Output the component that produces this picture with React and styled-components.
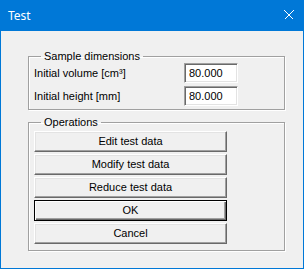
import React from 'react'
import styled, { createGlobalStyle } from 'styled-components'

const GlobalStyle = createGlobalStyle`
  html, body {
    margin: 0;
    padding: 0;
    background: #f0f0f0;
  }
  * {
    box-sizing: border-box;
  }
`

const Window = styled.div`
  width: 304px;
  height: 269px;
  display: flex;
  flex-direction: column;
  background: #f0f0f0;
  border: 1px solid #0078d7;
  border-top: 0;
  font-family: 'Liberation Sans', Arial, sans-serif;
  font-size: 11px;
  color: #000;
`

const TitleBar = styled.div`
  height: 31px;
  flex: none;
  display: flex;
  align-items: center;
  justify-content: space-between;
  padding: 0 10px 1px 8px;
  margin: 0 -1px;
  background: #0078d7;
  color: #fff;
`

const Title = styled.span`
  font-family: 'Noto Sans', 'Open Sans', sans-serif;
  font-size: 12px;
`

const Body = styled.div`
  display: flex;
  flex-direction: column;
  gap: 6px;
  padding: 19px 18px 0 27px;
`

const Group = styled.fieldset`
  margin: 0;
  padding: ${p => p.pad};
  border: 1px solid #a0a0a0;
  box-shadow: inset 1px 1px 0 #fff, 1px 1px 0 #fff;
  display: flex;
  flex-direction: column;
  gap: ${p => p.gap};
`

const Legend = styled.legend`
  padding: 0 3px;
  margin-left: 7px;
  line-height: 13px;
`

const FieldRow = styled.label`
  display: flex;
  align-items: center;
  justify-content: space-between;
  padding-right: 46px;
`

const Input = styled.input`
  width: 54px;
  height: 20px;
  padding: 0 0 0 4px;
  margin: 0;
  font: inherit;
  color: #000;
  background: #fff;
  border: 1px solid;
  border-color: #a0a0a0 #fff #fff #a0a0a0;
  box-shadow: inset 1px 1px 0 #696969, inset -1px -1px 0 #e3e3e3;
  outline: none;
`

const Button = styled.button`
  width: 193px;
  height: 21px;
  margin: 0;
  padding: 0 0 1px;
  font: inherit;
  color: #000;
  background: #f0f0f0;
  border: 1px solid;
  border-color: ${p => (p.primary ? '#000' : '#fff #696969 #696969 #fff')};
  box-shadow: ${p =>
    p.primary
      ? 'inset 1px 1px 0 #fff, inset -1px -1px 0 #696969, inset -2px -2px 0 #a0a0a0'
      : 'inset -1px -1px 0 #a0a0a0, inset 1px 1px 0 #e3e3e3'};
`

const CloseIcon = () => (
  <svg width="10" height="10" viewBox="0 0 10 10" shapeRendering="crispEdges">
    <path d="M0.5 0.5 L9.5 9.5 M9.5 0.5 L0.5 9.5" stroke="#fff" strokeWidth="1" />
  </svg>
)

const fields = [
  { label: 'Initial volume [cm³]', value: '80.000' },
  { label: 'Initial height [mm]', value: '80.000' },
]

const operations = ['Edit test data', 'Modify test data', 'Reduce test data']

export default function App() {
  return (
    <>
      <GlobalStyle />
      <Window>
        <TitleBar>
          <Title>Test</Title>
          <CloseIcon />
        </TitleBar>
        <Body>
          <Group pad="0 0 3px 5px" gap="3px">
            <Legend>Sample dimensions</Legend>
            {fields.map(({ label, value }) => (
              <FieldRow key={label}>
                {label}
                <Input defaultValue={value} />
              </FieldRow>
            ))}
          </Group>
          <Group pad="2px 0 6px 5px" gap="2px">
            <Legend>Operations</Legend>
            {operations.map(name => (
              <Button key={name}>{name}</Button>
            ))}
            <Button primary>OK</Button>
            <Button>Cancel</Button>
          </Group>
        </Body>
      </Window>
    </>
  )
}
